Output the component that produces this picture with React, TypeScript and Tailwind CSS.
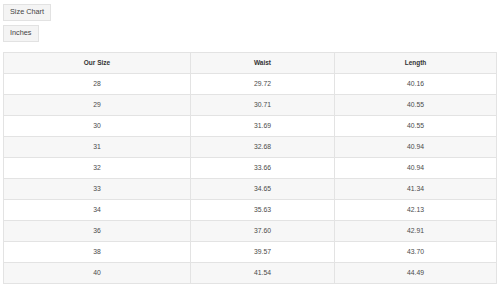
const rows = [
  ["28", "29.72", "40.16"],
  ["29", "30.71", "40.55"],
  ["30", "31.69", "40.55"],
  ["31", "32.68", "40.94"],
  ["32", "33.66", "40.94"],
  ["33", "34.65", "41.34"],
  ["34", "35.63", "42.13"],
  ["36", "37.60", "42.91"],
  ["38", "39.57", "43.70"],
  ["40", "41.54", "44.49"],
];

export default function App() {
  return (
    <div className="h-[290px] w-[500px] overflow-hidden bg-white font-['Liberation_Sans',Arial,sans-serif] text-[#444]">
      <div className="flex flex-col items-start gap-[4px] pl-[3px] pt-[4px]">
        <div className="flex h-[17px] items-center border border-[#e2e2e2] bg-[#f4f4f4] px-[6px] text-[7.3px] text-[#444]">
          Size Chart
        </div>
        <div className="flex h-[17px] items-center border border-[#e2e2e2] bg-[#f4f4f4] px-[6px] text-[7.3px] text-[#444]">
          Inches
        </div>
      </div>
      <table className="ml-[3px] mt-[10px] w-[493px] table-fixed border-collapse border border-[#e3e3e3] text-center">
        <colgroup>
          <col className="w-[187px]" />
          <col className="w-[144px]" />
          <col className="w-[162px]" />
        </colgroup>
        <thead>
          <tr className="h-[21px] bg-[#f7f7f7]">
            <th className="border border-[#e3e3e3] p-0 text-[6.5px] font-bold text-[#333]">Our Size</th>
            <th className="border border-[#e3e3e3] p-0 text-[6.5px] font-bold text-[#333]">Waist</th>
            <th className="border border-[#e3e3e3] p-0 text-[6.5px] font-bold text-[#333]">Length</th>
          </tr>
        </thead>
        <tbody>
          {rows.map((r, i) => (
            <tr key={r[0]} className={i % 2 === 1 ? "h-[21px] bg-[#f7f7f7]" : "h-[21px] bg-white"}>
              {r.map((c, j) => (
                <td key={j} className="border border-[#e3e3e3] p-0 text-[6.8px] text-[#4a4a4a]">
                  {c}
                </td>
              ))}
            </tr>
          ))}
        </tbody>
      </table>
    </div>
  );
}
